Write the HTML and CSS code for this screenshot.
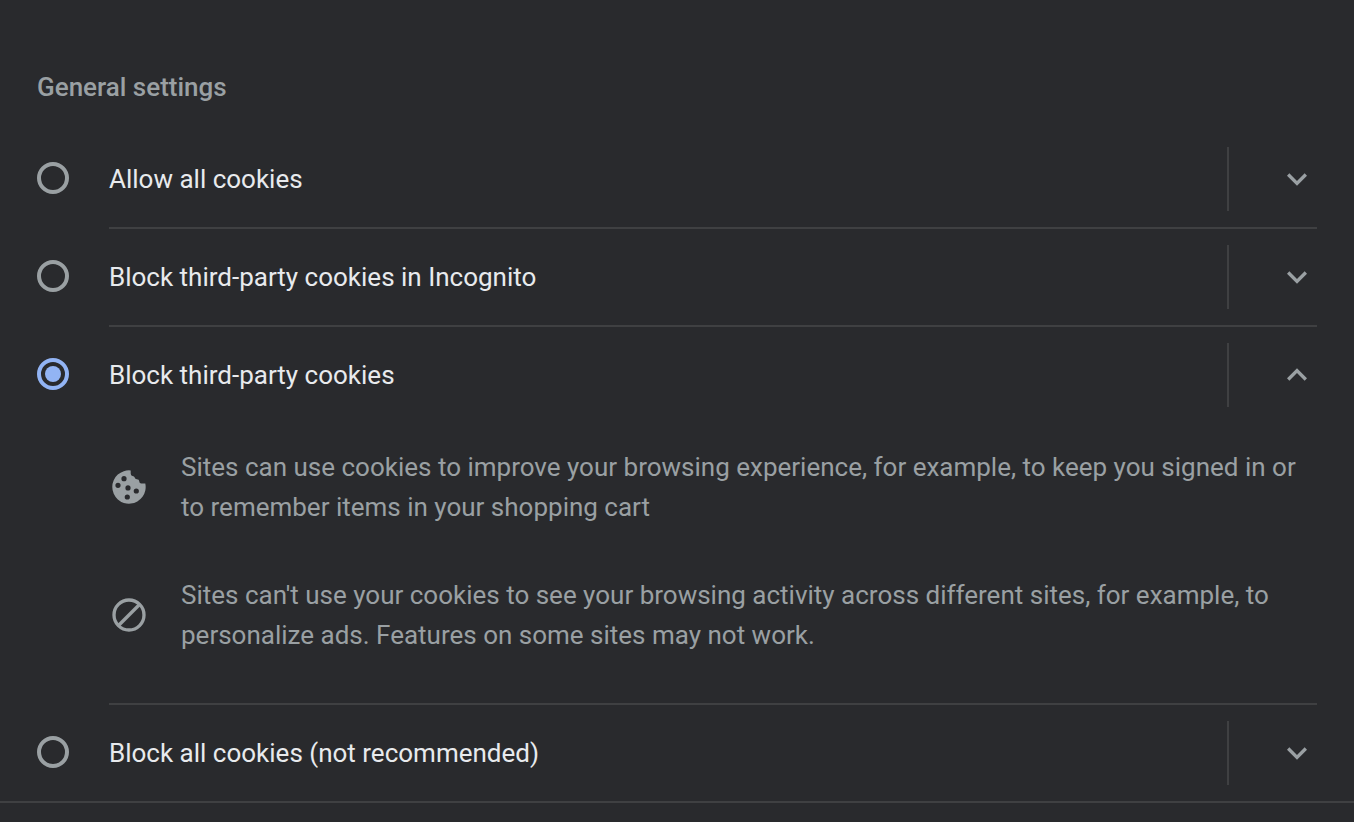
FILE: index.html
```html
<!DOCTYPE html>
<html lang="en">
<head>
<meta charset="utf-8">
<meta name="viewport" content="width=device-width, initial-scale=1">
<title>General settings</title>
<link rel="stylesheet" href="styles.css">
</head>
<body>
<main class="settings">
  <h2 class="heading">General settings</h2>
  <div class="options" role="radiogroup" aria-label="General settings">
    <section class="option">
      <input class="radio" type="radio" name="cookies" id="allow-all">
      <div class="body">
        <div class="row">
          <label class="title" for="allow-all">Allow all cookies</label>
          <button class="expand" type="button" aria-label="Show details" aria-expanded="false">
            <svg class="icon" viewBox="0 0 24 24"><path d="M7.41 8.59 12 13.17l4.59-4.58L18 10l-6 6-6-6z"/></svg>
          </button>
        </div>
      </div>
    </section>
    <section class="option">
      <input class="radio" type="radio" name="cookies" id="block-incognito">
      <div class="body">
        <div class="row">
          <label class="title" for="block-incognito">Block third-party cookies in Incognito</label>
          <button class="expand" type="button" aria-label="Show details" aria-expanded="false">
            <svg class="icon" viewBox="0 0 24 24"><path d="M7.41 8.59 12 13.17l4.59-4.58L18 10l-6 6-6-6z"/></svg>
          </button>
        </div>
      </div>
    </section>
    <section class="option">
      <input class="radio" type="radio" name="cookies" id="block-third" checked>
      <div class="body">
        <div class="row">
          <label class="title" for="block-third">Block third-party cookies</label>
          <button class="expand" type="button" aria-label="Hide details" aria-expanded="true">
            <svg class="icon" viewBox="0 0 24 24"><path d="m12 8-6 6 1.410 1.410L12 10.830l4.590 4.580L18 14z"/></svg>
          </button>
        </div>
        <ul class="details">
          <li class="detail">
            <svg class="icon" viewBox="0 0 40 40" aria-hidden="true">
              <path fill-rule="evenodd" d="M21.700 3.400V6.500Q21.700 8.800 23.500 8.900Q25.400 8.900 25.700 10.500Q26 12.300 27.800 12.300Q30.300 12.300 30.300 14.500Q30.300 16.500 32.300 16.500H36.300A16.700 16.700 0 1 1 21.700 3.400ZM15 9.100a2.600 2.600 0 1 0 0 5.200a2.600 2.600 0 1 0 0-5.200ZM9 15.700a2.600 2.600 0 1 0 0 5.200a2.600 2.600 0 1 0 0-5.200ZM19 18.300a2.600 2.600 0 1 0 0 5.200a2.600 2.600 0 1 0 0-5.200ZM27.300 21.400a2.600 2.600 0 1 0 0 5.200a2.600 2.600 0 1 0 0-5.200ZM18.300 27.400a2.600 2.600 0 1 0 0 5.200a2.600 2.600 0 1 0 0-5.200Z"/>
            </svg>
            <p class="text">Sites can use cookies to improve your browsing experience, for example, to keep you signed in or to remember items in your shopping cart</p>
          </li>
          <li class="detail">
            <svg class="icon" viewBox="0 0 24 24" aria-hidden="true"><g class="stroke"><circle cx="12" cy="12" r="9"/><path d="M5.700 18.300 18.300 5.700"/></g></svg>
            <p class="text">Sites can't use your cookies to see your browsing activity across different sites, for example, to personalize ads. Features on some sites may not work.</p>
          </li>
        </ul>
      </div>
    </section>
    <section class="option">
      <input class="radio" type="radio" name="cookies" id="block-all">
      <div class="body">
        <div class="row">
          <label class="title" for="block-all">Block all cookies (not recommended)</label>
          <button class="expand" type="button" aria-label="Show details" aria-expanded="false">
            <svg class="icon" viewBox="0 0 24 24"><path d="M7.41 8.59 12 13.17l4.59-4.58L18 10l-6 6-6-6z"/></svg>
          </button>
        </div>
      </div>
    </section>
  </div>
</main>
</body>
</html>
```
FILE: styles.css
```css
* {
  box-sizing: border-box;
}

body {
  margin: 0;
  background: #292a2d;
  color: #e8eaed;
  font: 400 26px/40px Roboto, "Liberation Sans", sans-serif;
}

.settings {
  padding-top: 67px;
  border-bottom: 2px solid #3f4042;
}

.heading {
  margin: 0 37px 24px;
  color: #9aa0a3;
  font-size: 26px;
  font-weight: 500;
  line-height: 40px;
}

.options {
  padding: 0 37px;
}

.option {
  display: flex;
  align-items: flex-start;
  gap: 40px;
}

.radio {
  appearance: none;
  display: grid;
  place-items: center;
  flex: none;
  width: 32px;
  height: 32px;
  margin: 31px 0 0;
  border: 4px solid #9aa0a3;
  border-radius: 50%;
}

.radio:checked {
  border-color: #92b4f4;
}

.radio:checked::before {
  content: "";
  width: 16px;
  height: 16px;
  border-radius: 50%;
  background: #92b4f4;
}

.body {
  flex: 1;
  min-width: 0;
}

.option:not(:last-child) .body {
  border-bottom: 2px solid #3f4042;
}

.row {
  display: flex;
  align-items: center;
  height: 96px;
}

.title {
  flex: 1;
}

.expand {
  display: flex;
  align-items: center;
  justify-content: flex-end;
  width: 90px;
  height: 64px;
  padding: 0;
  border: 0;
  border-left: 2px solid #3f4042;
  background: none;
}

.icon {
  flex: none;
  width: 40px;
  height: 40px;
  fill: #9aa0a3;
}

.stroke {
  fill: none;
  stroke: #9aa0a3;
  stroke-width: 2;
}

.details {
  display: flex;
  flex-direction: column;
  gap: 48px;
  margin: 0;
  padding: 24px 0 48px;
  list-style: none;
}

.detail {
  display: flex;
  align-items: center;
  gap: 32px;
  color: #9aa0a3;
}

.text {
  margin: 0;
}
```
